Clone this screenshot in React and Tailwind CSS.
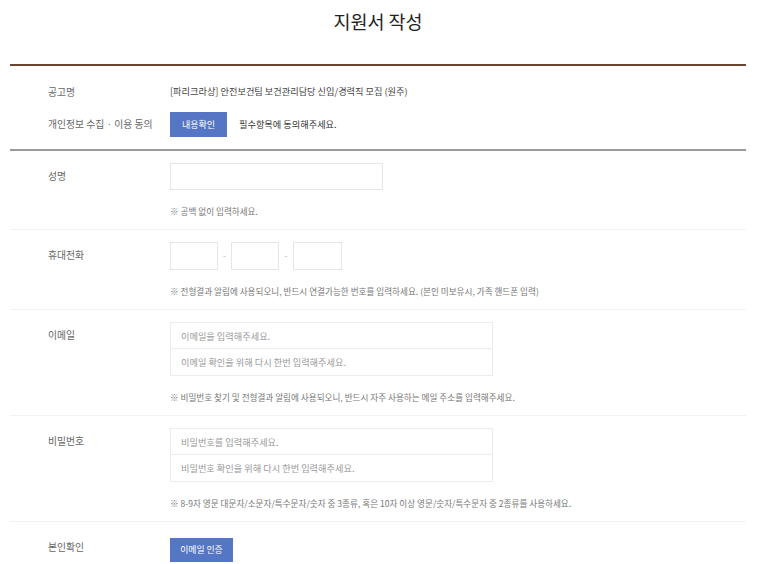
const FONT = "font-['Noto_Sans_CJK_KR','Noto_Sans',sans-serif]";

function Row({ label, children, hint, last }) {
  return (
    <div className={`flex pl-[38px] pt-3 ${last ? '' : 'pb-3 border-b border-[#f2f2f2]'}`}>
      <div className="w-[122px] shrink-0 text-[9.8px] leading-[27px] text-[#666]">{label}</div>
      <div className="flex-1">
        {children}
        {hint && <p className="mt-[15px] text-[8.6px] leading-[12px] text-[#777]">{hint}</p>}
      </div>
    </div>
  );
}

function Field({ className = '', placeholder }) {
  return (
    <input
      placeholder={placeholder}
      className={`block border border-[#e6e6e6] bg-white outline-none px-[10px] text-[9.2px] text-[#333] placeholder:text-[#999] ${className}`}
    />
  );
}

function DoubleBox({ first, second }) {
  return (
    <div className="w-[323px] border border-[#ececec]">
      <input placeholder={first} className="block w-full h-[26px] px-[10px] text-[9.2px] outline-none placeholder:text-[#999] border-b border-[#ececec]" />
      <input placeholder={second} className="block w-full h-[26px] px-[10px] text-[9.2px] outline-none placeholder:text-[#999]" />
    </div>
  );
}

export default function App() {
  return (
    <div className={`min-h-screen bg-white ${FONT}`}>
      <div className="ml-[10px] w-[736px]">
        <h1 className="h-[64px] pt-[7px] text-center text-[18.5px] leading-[28px] text-[#222]">지원서 작성</h1>

        {/* 공고 정보 */}
        <div className="border-t-2 border-[#6b4431] pt-4 pb-3">
          <div className="flex items-center h-[20px] pl-[38px]">
            <span className="w-[122px] text-[9.8px] text-[#666]">공고명</span>
            <span className="text-[9.2px] text-[#444]">[파리크라상] 안전보건팀 보건관리담당 신입/경력직 모집 (원주)</span>
          </div>
          <div className="flex items-center mt-[10px] pl-[38px]">
            <span className="w-[122px] text-[9.8px] text-[#666]">개인정보 수집 · 이용 동의</span>
            <button className="w-[57px] h-[25px] bg-[#5476c4] text-white text-[9px]">내용확인</button>
            <span className="ml-[12px] text-[9.2px] text-[#333]">필수항목에 동의해주세요.</span>
          </div>
        </div>

        {/* 입력 항목 */}
        <div className="border-t-2 border-[#9a9a9a]">
          <Row label="성명" hint="※ 공백 없이 입력하세요.">
            <Field className="w-[213px] h-[27px]" />
          </Row>

          <Row label="휴대전화" hint="※ 전형결과 알림에 사용되오니, 반드시 연결가능한 번호를 입력하세요. (본인 미보유시, 가족 핸드폰 입력)">
            <div className="flex items-center">
              <Field className="w-[48px] h-[28px]" />
              <span className="w-[13px] text-center text-[8px] text-[#aaa]">-</span>
              <Field className="w-[48px] h-[28px]" />
              <span className="w-[14px] text-center text-[8px] text-[#aaa]">-</span>
              <Field className="w-[49px] h-[28px]" />
            </div>
          </Row>

          <Row label="이메일" hint="※ 비밀번호 찾기 및 전형결과 알림에 사용되오니, 반드시 자주 사용하는 메일 주소를 입력해주세요.">
            <DoubleBox first="이메일을 입력해주세요." second="이메일 확인을 위해 다시 한번 입력해주세요." />
          </Row>

          <Row label="비밀번호" hint="※ 8-9자 영문 대문자/소문자/특수문자/숫자 중 3종류, 혹은 10자 이상 영문/숫자/특수문자 중 2종류를 사용하세요.">
            <DoubleBox first="비밀번호를 입력해주세요." second="비밀번호 확인을 위해 다시 한번 입력해주세요." />
          </Row>

          <Row label="본인확인" last>
            <button className="w-[63px] h-[24px] bg-[#5476c4] text-white text-[8.8px]">이메일 인증</button>
          </Row>
        </div>
      </div>
    </div>
  );
}
